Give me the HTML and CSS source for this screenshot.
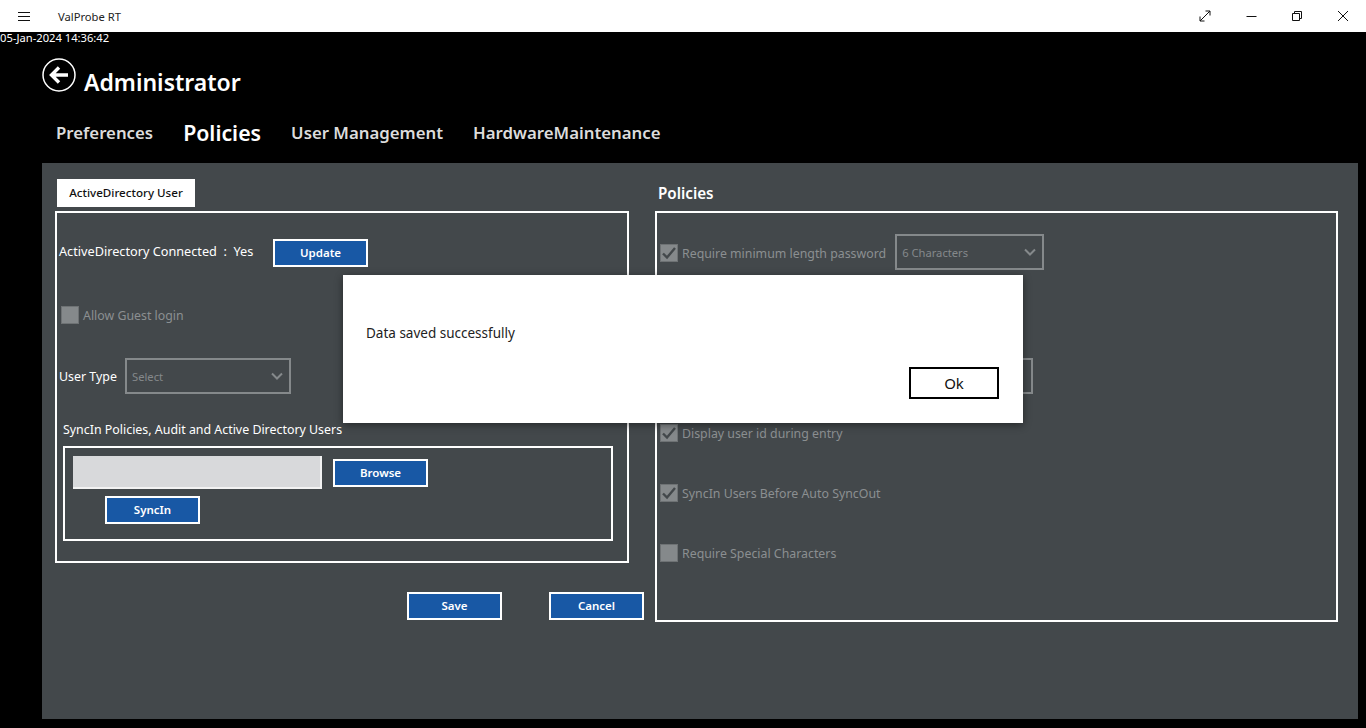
FILE: index.html
```html
<!DOCTYPE html>
<html lang="en">
<head>
    <meta charset="UTF-8">
    <meta name="viewport" content="width=device-width, initial-scale=1.0">
    <title>ValProbe RT</title>
    <link rel="stylesheet" href="styles.css">
</head>
<body>
    <div class="titlebar">
        <svg class="menu-icon" width="14" height="11" viewBox="0 0 14 11"><path d="M1 1.5h12M1 5.5h12M1 9.5h12" stroke="#111" fill="none"/></svg>
        <span class="app-name">ValProbe RT</span>
        <div class="win-btns">
            <svg width="12" height="12" viewBox="0 0 12 12"><path d="M1 11 11 1M6.5 1H11V5.5M1 6.5V11H5.5" stroke="#111" fill="none"/></svg>
            <svg width="12" height="12" viewBox="0 0 12 12"><path d="M1.5 6.5h10" stroke="#111" fill="none"/></svg>
            <svg width="12" height="12" viewBox="0 0 12 12"><path d="M1.5 3.5h7v7h-7zM3.5 3.5V1.5h7v7H8.5" stroke="#111" fill="none"/></svg>
            <svg width="12" height="12" viewBox="0 0 12 12"><path d="M1 1 11 11M11 1 1 11" stroke="#111" fill="none"/></svg>
        </div>
    </div>

    <div class="timestamp">05-Jan-2024 14:36:42</div>

    <div class="page-head">
        <svg class="back-icon" width="34" height="34" viewBox="0 0 34 34">
            <circle cx="17" cy="17" r="16" stroke="#fff" stroke-width="1.5" fill="none"/>
            <path d="M26 17H11M17 9.5 9.5 17 17 24.5" stroke="#fff" stroke-width="3.4" fill="none"/>
        </svg>
        <h1>Administrator</h1>
    </div>

    <div class="tabs">
        <span class="tab">Preferences</span>
        <span class="tab tab-active">Policies</span>
        <span class="tab">User Management</span>
        <span class="tab">HardwareMaintenance</span>
    </div>

    <div class="panel">
        <div class="col-left">
            <div class="subtab">ActiveDirectory User</div>
            <div class="box box-left">
                <div class="row-connected">
                    <span>ActiveDirectory Connected&nbsp; :&nbsp; Yes</span>
                    <button class="btn btn-update">Update</button>
                </div>
                <label class="check check-guest"><span class="tick"></span>Allow Guest login</label>
                <div class="row-type">
                    <span>User Type</span>
                    <div class="select select-type">Select<svg width="12" height="8" viewBox="0 0 12 8"><path d="M1 1.5 6 6.5 11 1.5" stroke="#85898b" stroke-width="2" fill="none"/></svg></div>
                </div>
                <div class="sync-title">SyncIn Policies, Audit and Active Directory Users</div>
                <div class="sync-box">
                    <div class="sync-top">
                        <div class="path-input"></div>
                        <button class="btn">Browse</button>
                    </div>
                    <button class="btn btn-sync">SyncIn</button>
                </div>
            </div>
            <div class="actions">
                <button class="btn">Save</button>
                <button class="btn">Cancel</button>
            </div>
        </div>

        <div class="col-right">
            <h2>Policies</h2>
            <div class="box box-right">
                <div class="check-row">
                    <label class="check"><span class="tick"><svg width="16" height="14" viewBox="0 0 16 14"><path d="M2 7.5 6 11.5 14 2" stroke="#43484b" stroke-width="2.4" fill="none"/></svg></span>Require minimum length password</label>
                    <div class="select select-len">6 Characters<svg width="12" height="8" viewBox="0 0 12 8"><path d="M1 1.5 6 6.5 11 1.5" stroke="#85898b" stroke-width="2" fill="none"/></svg></div>
                </div>
                <div class="check-row"></div>
                <div class="check-row"><div class="select select-hidden"></div></div>
                <div class="check-row">
                    <label class="check"><span class="tick"><svg width="16" height="14" viewBox="0 0 16 14"><path d="M2 7.5 6 11.5 14 2" stroke="#43484b" stroke-width="2.4" fill="none"/></svg></span>Display user id during entry</label>
                </div>
                <div class="check-row">
                    <label class="check"><span class="tick"><svg width="16" height="14" viewBox="0 0 16 14"><path d="M2 7.5 6 11.5 14 2" stroke="#43484b" stroke-width="2.4" fill="none"/></svg></span>SyncIn Users Before Auto SyncOut</label>
                </div>
                <div class="check-row">
                    <label class="check"><span class="tick"></span>Require Special Characters</label>
                </div>
            </div>
        </div>
    </div>

    <div class="dialog">
        <p>Data saved successfully</p>
        <button class="btn-ok">Ok</button>
    </div>
</body>
</html>
```

FILE: styles.css
```css
* {
    box-sizing: border-box;
    margin: 0;
    padding: 0;
}

html, body {
    height: 728px;
    overflow: hidden;
}

body {
    background-color: #000;
    color: #fff;
    font-family: "Noto Sans", "Open Sans", sans-serif;
    font-size: 12.5px;
    position: relative;
}

.titlebar {
    height: 32px;
    background-color: #fff;
    color: #222;
    display: flex;
    align-items: center;
    font-size: 11.2px;
    padding-left: 17px;
}

.menu-icon {
    margin-right: 27px;
}

.win-btns {
    margin-left: auto;
    display: flex;
    align-items: center;
    gap: 34px;
    padding-right: 17px;
}

.timestamp {
    font-size: 11.2px;
    line-height: 12px;
    height: 13px;
}

.page-head {
    display: flex;
    align-items: center;
    padding: 14px 0 0 42px;
    height: 50px;
}

.back-icon {
    margin-right: 8px;
    margin-top: -4px;
}

h1 {
    font-size: 23px;
    font-weight: 600;
    line-height: 34px;
    margin-top: 10px;
}

.tabs {
    display: flex;
    align-items: center;
    gap: 30px;
    padding-left: 56px;
    height: 36px;
    margin-top: 19px;
    margin-bottom: 13px;
}

.tab {
    font-size: 16.8px;
    font-weight: 600;
    color: #dcdcdc;
}

.tab-active {
    font-size: 21.3px;
    color: #fff;
}

.panel {
    margin-left: 42px;
    width: 1316px;
    height: 556px;
    background-color: #43484b;
    display: flex;
    padding: 16px 0 0 13px;
    gap: 26px;
}

.col-left {
    width: 574px;
    position: relative;
}

.col-right {
    width: 683px;
}

.subtab {
    margin-left: 2px;
    width: 138px;
    height: 28px;
    background-color: #fff;
    color: #111;
    font-size: 11.6px;
    font-weight: 500;
    line-height: 28px;
    text-align: center;
}

h2 {
    font-size: 15.2px;
    font-weight: 600;
    line-height: 28px;
    padding-left: 3px;
}

.box {
    border: 2px solid #fff;
    margin-top: 4px;
}

.box-left {
    height: 352px;
    padding-left: 2px;
}

.box-right {
    height: 411px;
    padding-top: 10px;
}

.btn {
    width: 95px;
    height: 28px;
    background-color: #1858a5;
    border: 2px solid #fff;
    color: #fff;
    font-family: inherit;
    font-size: 11.5px;
    font-weight: 600;
    padding-bottom: 2px;
}

.row-connected {
    display: flex;
    align-items: center;
    height: 28px;
    margin-top: 26px;
}

.row-connected span {
    width: 214px;
    font-size: 12.7px;
    padding-bottom: 5px;
}

.check {
    display: flex;
    align-items: center;
    color: #8b8f91;
    gap: 4px;
    font-size: 12.35px;
}

.check-guest {
    margin: 36px 0 0 2px;
    height: 24px;
}

.tick {
    width: 18px;
    height: 18px;
    background-color: #85898b;
    border: 1px solid #6e7274;
    display: flex;
    align-items: center;
    justify-content: center;
}

.row-type {
    display: flex;
    align-items: center;
    margin-top: 31px;
    height: 36px;
}

.row-type span {
    width: 66px;
    font-size: 12.4px;
}

.select {
    height: 36px;
    border: 2px solid #85898b;
    color: #85898b;
    font-size: 11.2px;
    display: flex;
    align-items: center;
    justify-content: space-between;
    padding: 0 6px 0 5px;
}

.select-type {
    width: 166px;
}

.select-len {
    width: 149px;
    margin-left: 9px;
    margin-top: -2px;
}

.select-hidden {
    width: 149px;
    margin-left: 224px;
    margin-top: 6px;
}

.sync-title {
    margin: 27px 0 0 4px;
    line-height: 18px;
    font-size: 12.4px;
}

.sync-box {
    border: 2px solid #fff;
    width: 550px;
    height: 95px;
    margin: 7px 0 0 4px;
    padding: 8px 0 0 8px;
}

.sync-top {
    display: flex;
    align-items: flex-start;
    gap: 11px;
}

.path-input {
    width: 249px;
    height: 33px;
    background-color: #d8d9db;
    border-right: 2px solid #f2f2f2;
    border-bottom: 2px solid #f2f2f2;
}

.sync-top .btn {
    margin-top: 3px;
}

.btn-sync {
    display: block;
    margin: 7px 0 0 32px;
}

.actions {
    display: flex;
    justify-content: flex-end;
    gap: 47px;
    margin-top: 29px;
    margin-right: -15px;
}

.check-row {
    height: 60px;
    display: flex;
    align-items: center;
    padding-left: 3px;
}

.dialog {
    position: absolute;
    left: 343px;
    top: 275px;
    width: 680px;
    height: 148px;
    background-color: #fff;
    color: #222;
    box-shadow: 0 2px 8px rgba(0, 0, 0, 0.45);
    padding: 48px 24px 0 23px;
    font-size: 13.5px;
}

.dialog p {
    line-height: 20px;
}

.btn-ok {
    display: block;
    width: 90px;
    height: 32px;
    margin: 24px 0 0 auto;
    background-color: #fff;
    border: 2px solid #000;
    color: #111;
    font-family: inherit;
    font-size: 15px;
}
```
